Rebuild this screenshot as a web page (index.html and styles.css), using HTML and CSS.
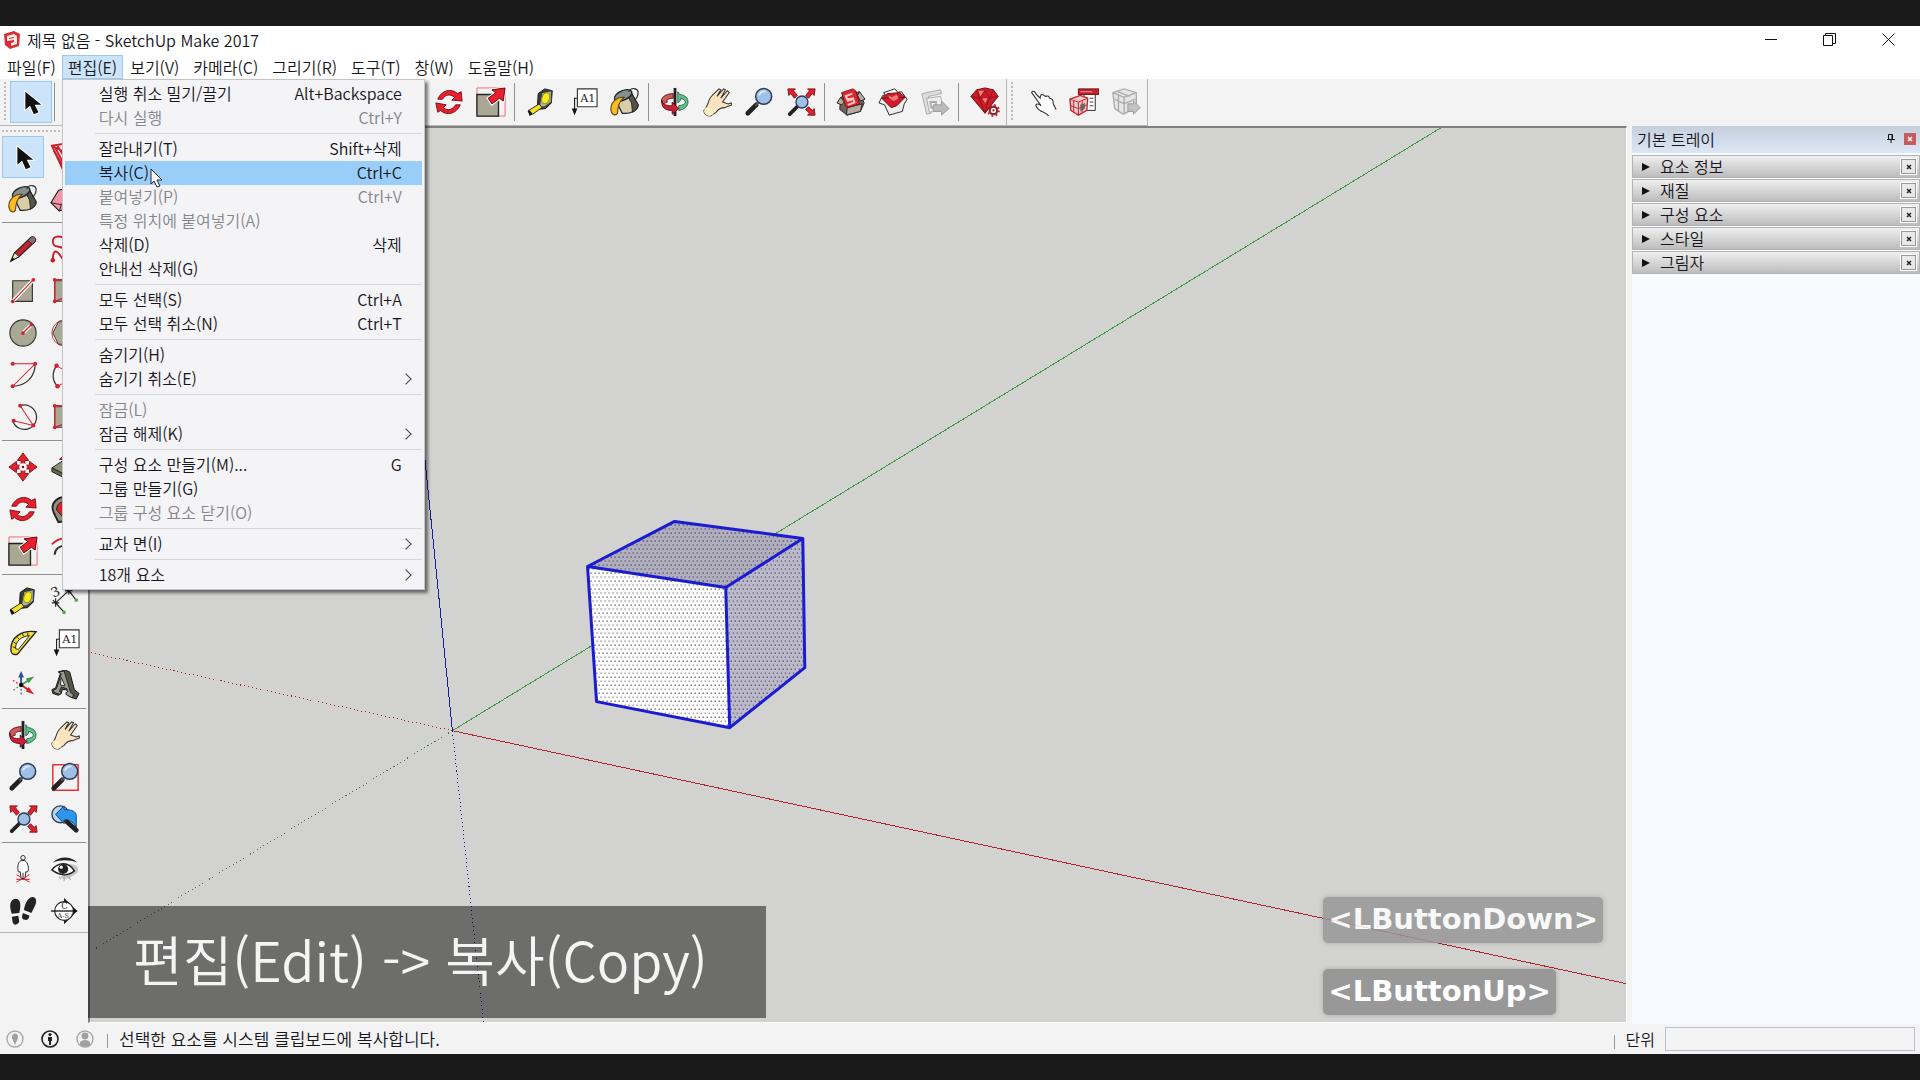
FILE: index.html
```
<!DOCTYPE html>
<html lang="ko">
<head>
  <meta charset="UTF-8" />
  <meta name="viewport" content="width=device-width, initial-scale=1" />
  <title>제목 없음 - SketchUp Make 2017</title>
  <link rel="stylesheet" href="styles.css">
</head>
<body>
  <!-- Icon sprite -->
  <svg class="sprite" aria-hidden="true">
    <symbol id="i-select" viewBox="0 0 32 32">
      <path d="M10 5v19l5-4 4 9 5-2-4-8h7z" fill="#111" stroke="#fff" stroke-width="2" paint-order="stroke"/>
    </symbol>
    <symbol id="i-component" viewBox="0 0 32 32">
      <path d="M2 4l12-2 16 5-4 18-12 5z" fill="#fbe9e9" stroke="#c9202c" stroke-width="2"/>
      <path d="M2 4l12 6 16-3M14 10v20M5 5l9 17M8 4l6 10M4 9l10 17" fill="none" stroke="#c9202c" stroke-width="2"/>
    </symbol>
    <symbol id="i-paint" viewBox="0 0 32 32">
      <path d="M5 12L22 5l8 14c0 6-8 10-17 9z" fill="#d8cfa9" stroke="#222" stroke-width="1.4"/>
      <path d="M22 5l8 14c0 4-3 6-6 8l-1-10-4-7z" fill="#55534b" stroke="#222"/>
      <ellipse cx="14" cy="9" rx="10" ry="5" transform="rotate(-24 14 9)" fill="#85918f" stroke="#222" stroke-width="1.4"/>
      <path d="M20 5c2-5 9-4 10 0 0 4-1 7-4 9" fill="none" stroke="#333" stroke-width="1.3"/>
      <path d="M15 11C8 10 0 16 1 25c1 5 5 6 7 3 0-6 1-12 7-17z" fill="#fbb924" stroke="#5b4310" stroke-width="1.2"/>
    </symbol>
    <symbol id="i-eraser" viewBox="0 0 32 32">
      <path d="M1 20L9 7l12-4 9 6-7 14-13 6z" fill="#f792ab" stroke="#222" stroke-width="1.2"/>
      <path d="M1 20l11 2 9-12 9-1M12 22l-2 7" fill="none" stroke="#222"/>
    </symbol>
    <symbol id="i-pencil" viewBox="0 0 32 32">
      <path d="M3 29l4-9L24 4c2-2 6 1 5 4L12 24z" fill="#c3242e" stroke="#222" stroke-width="1.2"/>
      <path d="M3 29l4-9 5 4z" fill="#efe2b6" stroke="#222"/><path d="M3 29l2-4 2 2z" fill="#111"/>
      <path d="M21 7l4-4c3-1 6 2 4 5l-3 3z" fill="#8c6c6c" stroke="#222"/>
    </symbol>
    <symbol id="i-freehand" viewBox="0 0 32 32">
      <path d="M3 29c0-18 7-8 10-3s12-6 4-10S3 15 3 8s8-6 14-3 10 2 12-1" fill="none" stroke="#c9202c" stroke-width="2"/>
      <circle cx="3" cy="28" r="2.4" fill="#c9202c"/>
    </symbol>
    <symbol id="i-rect" viewBox="0 0 32 32">
      <path d="M5 5h21v22H5z" fill="#a9a894" stroke="#333" stroke-width="1.2"/>
      <path d="M5 27L26 5" stroke="#fff" stroke-width="4"/><path d="M5 27L26 5" stroke="#d3222e" stroke-width="1.2"/>
      <circle cx="5" cy="27" r="2" fill="#d3222e"/><circle cx="27" cy="4" r="2" fill="#d3222e"/>
    </symbol>
    <symbol id="i-rotrect" viewBox="0 0 32 32">
      <path d="M5 5h22v22H5z" fill="#a9a894" stroke="#333"/>
      <path d="M5 27V4h22M5 27l22-8" fill="none" stroke="#d3222e" stroke-width="1.5"/>
      <circle cx="5" cy="4" r="2" fill="#d3222e"/><circle cx="5" cy="27" r="2" fill="#d3222e"/><circle cx="27" cy="4" r="2" fill="#d3222e"/>
    </symbol>
    <symbol id="i-circle" viewBox="0 0 32 32">
      <circle cx="16" cy="16" r="14" fill="#a9a894" stroke="#333" stroke-width="1.2"/>
      <path d="M16 16l9-9" stroke="#fff" stroke-width="4"/><path d="M16 16l9-9" stroke="#d3222e" stroke-width="1.4"/>
      <circle cx="16" cy="16" r="2" fill="#d3222e"/><circle cx="25" cy="7" r="2" fill="#d3222e"/>
    </symbol>
    <symbol id="i-polygon" viewBox="0 0 32 32">
      <circle cx="16" cy="16" r="14" fill="#fff" stroke="#d3222e"/>
      <path d="M3 16L9 4h14l6 12-6 12H9z" fill="#a9a894" stroke="#333"/>
    </symbol>
    <symbol id="i-arc" viewBox="0 0 32 32">
      <path d="M29 4c0 14-10 24-24 24" fill="none" stroke="#333" stroke-width="1.3"/>
      <path d="M5 4h24L5 28" fill="none" stroke="#d3222e" stroke-width="1.1"/>
      <circle cx="5" cy="4" r="2.2" fill="#d3222e"/><circle cx="29" cy="4" r="2.2" fill="#d3222e"/><circle cx="5" cy="28" r="2.2" fill="#d3222e"/>
    </symbol>
    <symbol id="i-arc2" viewBox="0 0 32 32">
      <path d="M7 6C2 13 2 22 8 28" fill="none" stroke="#333" stroke-width="1.4"/>
      <path d="M7 6l20 12L8 28" fill="none" stroke="#d3222e"/>
      <circle cx="7" cy="6" r="2.4" fill="#d3222e"/><circle cx="8" cy="28" r="2.4" fill="#d3222e"/>
    </symbol>
    <symbol id="i-pie" viewBox="0 0 32 32">
      <path d="M13 4a13 13 0 1 1-8 16" fill="none" stroke="#333" stroke-width="1.3"/>
      <path d="M13 4l14 21-21-5" fill="none" stroke="#d3222e" stroke-width="1.1"/>
      <circle cx="13" cy="4" r="2.2" fill="#d3222e"/><circle cx="27" cy="25" r="2.2" fill="#d3222e"/><circle cx="6" cy="20" r="2.2" fill="#d3222e"/>
    </symbol>
    <symbol id="i-move" viewBox="0 0 32 32">
      <path d="M16 1l6 8h-4v5h5v-4l8 6-8 6v-4h-5v5h4l-6 8-6-8h4v-5H9v4l-8-6 8-6v4h5V9h-4z" fill="#e8202e" stroke="#7c1219"/>
      <circle cx="16" cy="16" r="4" fill="#fff"/><circle cx="16" cy="16" r="1.4" fill="#7c1219"/>
    </symbol>
    <symbol id="i-pushpull" viewBox="0 0 32 32">
      <path d="M2 17L14 9l16 7-12 9z" fill="#8f9279" stroke="#222"/><path d="M2 17v4l16 8 12-9v-4l-12 9z" fill="#63654f" stroke="#222"/>
      <path d="M16 2l6 6h-4v7h-4V8h-4z" fill="#e8202e" stroke="#7c1219"/>
    </symbol>
    <symbol id="i-rotate" viewBox="0 0 32 32">
      <path d="M4 13C8 3 19 1 25 7l4-2 1 10-11-1 3-3C17 7 12 8 9 13z" fill="#e8202e" stroke="#7c1219"/>
      <path d="M28 19c-4 10-15 12-21 6l-3 2-2-10 11 2-3 3c5 4 10 2 13-3z" fill="#e8202e" stroke="#7c1219"/>
    </symbol>
    <symbol id="i-follow" viewBox="0 0 32 32">
      <path d="M4 20C-1 8 10 2 20 3l10 8-4 16-17 3z" fill="#92917f" stroke="#222" stroke-width="2"/>
      <path d="M7 17C7 8 15 7 22 9l-2 11-6 5z" fill="#d7232e" stroke="#222"/>
    </symbol>
    <symbol id="i-scale" viewBox="0 0 32 32">
      <path d="M1 1h30v30H1z" fill="none" stroke="#ee6570"/>
      <path d="M1 8h23v23H1z" fill="#a9a894" stroke="#222" stroke-width="1.4"/>
      <path d="M31 1l-2 14-4-3-8 6-4-6 8-6-4-3z" fill="#e8202e" stroke="#fff" stroke-width="3" paint-order="stroke"/>
      <path d="M31 1l-2 14-4-3-8 6-4-6 8-6-4-3z" fill="#e8202e" stroke="#5c0d13"/>
    </symbol>
    <symbol id="i-offset" viewBox="0 0 32 32">
      <path d="M2 9C9 1 22 0 29 8" fill="none" stroke="#d3222e" stroke-width="2"/><path d="M5 20c0-13 22-13 22 2" fill="none" stroke="#333" stroke-width="2"/>
    </symbol>
    <symbol id="i-tape" viewBox="0 0 32 32">
      <path d="M13 7l7-5 8 2-1 13-6 6-9 1z" fill="#3c3c38" stroke="#111"/>
      <path d="M17 6l10-2v12l-7 5-6 1z" fill="#aeb0a4" stroke="#333"/>
      <ellipse cx="21" cy="12" rx="4" ry="6" fill="#faeb1a" stroke="#8b8420" transform="rotate(18 21 12)"/>
      <path d="M14 18l3 4L7 29l-4-4z" fill="#f4e21c" stroke="#222"/><path d="M3 24l4 5-3 2-2-5z" fill="#111"/>
    </symbol>
    <symbol id="i-dimension" viewBox="0 0 32 32">
      <path d="M6 18L20 5M6 18l9 10M20 5l8 10M2 18h8M6 13v9M3 15l6 6M16 5h8M20 1v8M17 2l6 6" fill="none" stroke="#222" stroke-width="1.2"/>
      <circle cx="28" cy="15" r="2" fill="#55b04b"/><circle cx="15" cy="28" r="2" fill="#55b04b"/>
      <text x="2" y="11" class="icon-text" font-size="14" transform="rotate(-25 6 8)">3</text>
    </symbol>
    <symbol id="i-protractor" viewBox="0 0 32 32">
      <path d="M3 23C3 10 14 2 30 4L10 28C5 29 3 27 3 23z" fill="#f3de2f" stroke="#222" stroke-width="1.4"/>
      <path d="M8 22c0-8 6-13 15-14L11 23z" fill="#f5f5f5" stroke="#222"/>
      <path d="M5 20l3 1M6 15l3 2M10 10l2 2M15 6l2 3M21 5v3" stroke="#222"/>
    </symbol>
    <symbol id="i-text" viewBox="0 0 32 32">
      <path d="M10 2h21v19H10z" fill="#fff" stroke="#333" stroke-width="1.2"/>
      <path d="M10 12H7v12" fill="none" stroke="#222" stroke-width="1.2"/><path d="M4 23h6l-3 7z" fill="#111"/>
      <text x="13" y="16" class="icon-text" font-size="12">A1</text>
    </symbol>
    <symbol id="i-axes" viewBox="0 0 32 32">
      <path d="M14 16v11" stroke="#25509f" stroke-width="1.2" stroke-dasharray="2 2"/>
      <path d="M14 16L5 22" stroke="#3f9b48" stroke-width="1.2" stroke-dasharray="2 2"/>
      <path d="M14 16L5 11" stroke="#d3222e" stroke-width="1.2" stroke-dasharray="2 2"/>
      <path d="M14 16V6" stroke="#25509f" stroke-width="2"/><path d="M11 8l3-7 3 7z" fill="#25509f"/>
      <path d="M14 16l8-5" stroke="#3f9b48" stroke-width="2"/><path d="M19 9l9-2-6 7z" fill="#3f9b48"/>
      <path d="M14 16l9 6" stroke="#d3222e" stroke-width="2"/><path d="M22 18l6 8-9-3z" fill="#d3222e"/>
      <circle cx="14" cy="16" r="2.4" fill="#111"/>
    </symbol>
    <symbol id="i-text3d" viewBox="0 0 32 32">
      <path d="M9 2l7-2 5 2 5 19 5 4-3 6-8-3-1-3 1-2-3-2h-4l-1 4-3 2-6-2-1-4 4-2 5-15z" fill="#53544c" stroke="#111"/>
      <path d="M9 2l6-1 7 23 3 2-1 4-7-4v-2l2-1-1-3-6-2-2 5 2 1-1 2-7-2v-3l3-1 5-16z" fill="#9b9b8c" stroke="#222"/>
      <path d="M12 8l4 9-5-1z" fill="#f4f4f4" stroke="#222"/>
    </symbol>
    <symbol id="i-orbit" viewBox="0 0 32 32">
      <path d="M14 7C1 8 0 15 3 18l5-2c-2-2 1-4 6-4z" fill="#cf5b57" stroke="#6b1015"/>
      <path d="M19 5v12l3-3v-2c7 2 7 7-2 8v5c13-2 13-16 1-17z" fill="#5fc08c" stroke="#2b6b45"/>
      <path d="M16 1v30" stroke="#222" stroke-width="3"/>
      <path d="M2 14c0 5 6 6 11 6v-4l7 7-7 6v-4C6 25 1 22 2 14z" fill="#cf1f38" stroke="#5c0d19"/>
    </symbol>
    <symbol id="i-hand" viewBox="0 0 32 32">
      <path d="M2 25c5-4 4-12 9-16l7-7 2 1-4 7 7-8 2 1-5 9 7-8 2 2-7 10 6 2 3-1 1 2-8 3c-6 0-7 3-9 5l-6 4c-4 0-7-2-7-6z" fill="#fbe3c0" stroke="#333" stroke-width="1.1"/>
      <path d="M3 23c5-4 8 1 9 6l-4 2c-4 0-7-4-5-8z" fill="#fbf0c4"/>
    </symbol>
    <symbol id="i-zoom" viewBox="0 0 32 32">
      <path d="M4 28l9-9" stroke="#222" stroke-width="5" stroke-linecap="round"/><path d="M12 20l4-4" stroke="#555" stroke-width="2"/>
      <circle cx="21" cy="10" r="8.5" fill="#9fc0e6" stroke="#2c3a55" stroke-width="1.6"/>
      <path d="M16 9c1-3 4-5 7-4" fill="none" stroke="#dbe9f8" stroke-width="2"/>
    </symbol>
    <symbol id="i-zoomwin" viewBox="0 0 32 32">
      <path d="M3 3h27v27H3z" fill="none" stroke="#e8303c" stroke-width="1.6"/><use href="#i-zoom"/>
    </symbol>
    <symbol id="i-zoomext" viewBox="0 0 32 32">
      <path d="M4 29l9-9" stroke="#222" stroke-width="4" stroke-linecap="round"/>
      <circle cx="17" cy="16" r="6.4" fill="#9fc0e6" stroke="#2c3a55" stroke-width="1.4"/>
      <path d="M2 2h8l-2 2 4 5-3 3-4-5-2 2zM31 2h-8l2 2-4 5 3 3 4-5 2 2zM31 30h-8l2-2-4-4 3-3 4 4 2-2z" fill="#e1202e" stroke="#7c1219"/>
    </symbol>
    <symbol id="i-previous" viewBox="0 0 32 32">
      <circle cx="11" cy="11" r="9" fill="#b8d2ef" stroke="#2c3a55" stroke-width="1.4"/>
      <path d="M6 11l9-9v4c9 0 13 2 13 7v13c-2-6-6-9-13-9v4z" fill="#2d97ee" stroke="#163f7a"/>
      <path d="M18 19l10 9" stroke="#222" stroke-width="5" stroke-linecap="round"/>
    </symbol>
    <symbol id="i-camera" viewBox="0 0 32 32">
      <path d="M9 22l14 8M23 22L9 30M9 27h14" stroke="#e0303c" stroke-width="1.2"/>
      <path d="M14 7c-4 2-4 8-3 12h2l1 7h4l1-7h2c2-4 0-10-3-12z" fill="#fff" stroke="#222"/><circle cx="16" cy="4" r="2.4" fill="#fff" stroke="#222"/><path d="M16 20v6" stroke="#222"/>
    </symbol>
    <symbol id="i-eye" viewBox="0 0 32 32">
      <path d="M3 9C10 2 22 2 29 9 21 6 11 6 3 9z" fill="#222"/><path d="M20 11c7-1 12 3 9 9l-9 6H11z" fill="#c4c4c4"/>
      <path d="M2 17c7-9 18-9 24 1-7 6-16 5-24-1z" fill="#fff" stroke="#222" stroke-width="1.6"/>
      <circle cx="14" cy="16" r="5.4" fill="#222"/><circle cx="12" cy="14" r="1.7" fill="#fff"/>
      <path d="M10 24l1 3M15 25v4M20 24l2 4" stroke="#999"/>
    </symbol>
    <symbol id="i-walk" viewBox="0 0 32 32">
      <path d="M8 3c6 0 6 8 4 15l-8 1C1 10 2 4 8 3zM4 22l7-1 1 6c-1 4-6 5-7 1zM26 1c5 0 5 6 2 11l-3 6-8-3c1-7 4-13 9-14zM16 18l7 3c-1 5-4 5-6 4-3-1-2-4-1-7z" fill="#222"/>
    </symbol>
    <symbol id="i-section" viewBox="0 0 32 32">
      <path d="M15 2l14 14-14 14z" fill="#111"/><circle cx="15" cy="16" r="10" fill="#fff" stroke="#222" stroke-width="1.2"/><path d="M1 16h28" stroke="#111" stroke-width="1.4"/>
      <text x="12" y="14" class="icon-text" font-size="9">C</text><text x="8" y="23" class="icon-text" font-size="7">A-S</text>
    </symbol>
    <symbol id="i-box" viewBox="0 0 32 32">
      <path d="M5 11l20-6 5 12-4 9-14 4-8-6z" fill="#6d655c" stroke="#222"/>
      <path d="M5 11l-4 6 5 2 3-3zM25 5l6 8-5 2-3-6zM12 22l-1 8 15-4 2-8z" fill="#b5aba1" stroke="#222"/>
    </symbol>
    <symbol id="i-warehouse" viewBox="0 0 32 32">
      <use href="#i-box"/><path d="M6 6l12-4 3 2 4 14-12 4-3-2z" fill="#e1252f" stroke="#7c1219"/>
      <path d="M9 9l8-3 1 2-6 2 1 2 6-1 2 6-8 3-1-2 6-2v-2l-6 2z" fill="#f7c9c9"/>
    </symbol>
    <symbol id="i-extware" viewBox="0 0 32 32">
      <path d="M5 9l-4 8 6 2 5 11 14-4 2-8 3-5-6-8z" fill="#eee" stroke="#222"/><path d="M6 6l12-4 5 6-12 6z" fill="#fff" stroke="#222"/>
      <path d="M4 12l6-5 13-1 6 5-9 9-6 2z" fill="#d21d29" stroke="#6b1015"/><path d="M4 12l25-1" stroke="#6b1015"/>
      <path d="M11 9l4 2 5-3 2 4-5 3-5-3z" fill="#ec7f7d"/>
    </symbol>
    <symbol id="i-layout" viewBox="0 0 32 32">
      <path d="M2 7l20-4 1 4-14 3 3 18-5 1z" fill="#ddd" stroke="#aaa"/><path d="M7 12l15-2 3 14-15 3z" fill="#eee" stroke="#aaa"/><path d="M11 16h6v6h-5z" fill="#fff" stroke="#aaa" stroke-width="2"/>
      <path d="M14 19h9v-4l8 8-8 7v-4h-9z" fill="#bbb" stroke="#999"/>
    </symbol>
    <symbol id="i-ruby" viewBox="0 0 32 32">
      <path d="M1 10l6-7 9-2 9 2 5 7-14 18z" fill="#cf1b28" stroke="#6b1015"/>
      <path d="M1 10l9 2 10 0 10-2M7 3l3 9 6-8 5 8 4-9M10 12l6 16 4-16" fill="none" stroke="#8a121b"/><path d="M9 4l6 0-4 6zM13 12l6 0-3 5z" fill="#f2837f"/>
      <circle cx="25" cy="25" r="4" fill="#fff" stroke="#a02028" stroke-width="2.4"/><circle cx="25" cy="25" r="6" fill="none" stroke="#a02028" stroke-width="1.6" stroke-dasharray="2 2.7"/><circle cx="25" cy="25" r="1.2" fill="#a02028"/>
    </symbol>
    <symbol id="i-interact" viewBox="0 0 32 32">
      <path d="M5 6c1-3 4-1 5 2l4 4c0-4 2-5 4-3l2 1c2-1 4 0 4 2 3 0 4 3 4 6l3 6-8 7c-2-5-9-3-13-10-2-3 2-4 5-1z" fill="#fff"/>
      <path d="M31 24l-3-6c0-3-1-6-4-6 0-2-2-3-4-2l-2-1c-2-2-4-1-4 3l-4-4C9 5 6 3 5 6l10 14c-3-3-7-2-5 1 4 7 11 5 13 10" fill="none" stroke="#333" stroke-width="1.2"/>
    </symbol>
    <symbol id="i-compopt" viewBox="0 0 32 32">
      <path d="M16 5h12v20H16z" fill="#fff" stroke="#222"/><path d="M10 2h22v6H10z" fill="#c8202c" stroke="#6b1015"/><path d="M12 5h13" stroke="#f2a1a1"/><path d="M22 12h4M22 16h4M22 20h4" stroke="#333"/>
      <path d="M1 13l11-4 8 3-1 13-9 5-8-5z" fill="#efc8c8" stroke="#c8202c" stroke-width="1.4"/><path d="M1 13l9 3 10-4M10 16v14M5 15v12M14 15v12M2 20l8 3 9-4" fill="none" stroke="#c8202c"/><path d="M12 19l5-2v6l-5 3z" fill="#666"/>
    </symbol>
    <symbol id="i-compattr" viewBox="0 0 32 32">
      <path d="M2 6l12-4 13 4v16l-14 7-9-6z" fill="#e6e6e6" stroke="#aaa" stroke-width="1.4"/><path d="M2 6l12 5 13-5M14 11v17M8 8v18M4 13l10 5 12-5M7 5l13 5" fill="none" stroke="#aaa" stroke-width="1.4"/>
      <path d="M18 18h6v-3l7 7-7 7v-3h-6z" fill="#c3c3c3" stroke="#999"/>
    </symbol>
  </svg>

  <div class="app">
    <header class="title-bar">
      <svg class="app-logo" viewBox="0 0 18 18" aria-hidden="true">
        <path d="M1 3l10-3 6 3-1 12-9 3-5-4z" fill="#d92b33"/>
        <path d="M4 5l7-2 3 2v8l-6 2v-3l3-1V9l-7 1z" fill="#fff" opacity=".9"/><path d="M6 7l5-1v1l-5 1z" fill="#d92b33"/>
      </svg>
      <h1 class="title">제목 없음 - SketchUp Make 2017</h1>
      <div class="window-controls">
        <button type="button" aria-label="최소화"><svg viewBox="0 0 13 13"><path d="M0 6.5h12"/></svg></button>
        <button type="button" aria-label="이전 크기로 복원"><svg viewBox="0 0 13 13"><path d="M.5 2.5h9v10h-9zM2.5 2V.5h10v10H10"/></svg></button>
        <button type="button" aria-label="닫기"><svg viewBox="0 0 13 13"><path d="M.5.5l12 12M12.5.5l-12 12"/></svg></button>
      </div>
    </header>

    <nav class="menu-bar">
      <button type="button">파일(F)</button>
      <div class="menu-open">
        <button type="button" class="active" aria-expanded="true">편집(E)</button>
        <div class="dropdown">
          <button type="button"><span>실행 취소 밀기/끌기</span><kbd>Alt+Backspace</kbd></button>
          <button type="button" disabled><span>다시 실행</span><kbd>Ctrl+Y</kbd></button>
          <hr>
          <button type="button"><span>잘라내기(T)</span><kbd>Shift+삭제</kbd></button>
          <button type="button" class="hovered"><span>복사(C)</span><kbd>Ctrl+C</kbd>
            <svg class="pointer" viewBox="0 0 13 20" aria-hidden="true"><path d="M1 1v15l3-3 3 6 3-1-3-6h5z"/></svg>
          </button>
          <button type="button" disabled><span>붙여넣기(P)</span><kbd>Ctrl+V</kbd></button>
          <button type="button" disabled><span>특정 위치에 붙여넣기(A)</span></button>
          <button type="button"><span>삭제(D)</span><kbd>삭제</kbd></button>
          <button type="button"><span>안내선 삭제(G)</span></button>
          <hr>
          <button type="button"><span>모두 선택(S)</span><kbd>Ctrl+A</kbd></button>
          <button type="button"><span>모두 선택 취소(N)</span><kbd>Ctrl+T</kbd></button>
          <hr>
          <button type="button"><span>숨기기(H)</span></button>
          <button type="button" class="has-sub"><span>숨기기 취소(E)</span></button>
          <hr>
          <button type="button" disabled><span>잠금(L)</span></button>
          <button type="button" class="has-sub"><span>잠금 해제(K)</span></button>
          <hr>
          <button type="button"><span>구성 요소 만들기(M)...</span><kbd>G</kbd></button>
          <button type="button"><span>그룹 만들기(G)</span></button>
          <button type="button" disabled><span>그룹 구성 요소 닫기(O)</span></button>
          <hr>
          <button type="button" class="has-sub"><span>교차 면(I)</span></button>
          <hr>
          <button type="button" class="has-sub"><span>18개 요소</span></button>
        </div>
      </div>
      <button type="button">보기(V)</button>
      <button type="button">카메라(C)</button>
      <button type="button">그리기(R)</button>
      <button type="button">도구(T)</button>
      <button type="button">창(W)</button>
      <button type="button">도움말(H)</button>
    </nav>

    <div class="toolbar">
      <div class="tool-strip">
        <span class="grip"></span>
        <button type="button" class="tool selected" aria-label="선택"><svg><use href="#i-select"/></svg></button>
        <span class="divider"></span>
        <button type="button" class="tool" aria-label="지우개"><svg><use href="#i-eraser"/></svg></button>
        <span class="divider"></span>
        <button type="button" class="tool" aria-label="선"><svg><use href="#i-pencil"/></svg></button>
        <button type="button" class="tool" aria-label="호"><svg><use href="#i-arc"/></svg></button>
        <button type="button" class="tool" aria-label="도형"><svg><use href="#i-rect"/></svg></button>
        <span class="divider"></span>
        <button type="button" class="tool" aria-label="밀기/끌기"><svg><use href="#i-pushpull"/></svg></button>
        <button type="button" class="tool" aria-label="따라가기"><svg><use href="#i-follow"/></svg></button>
        <span class="divider"></span>
        <button type="button" class="tool" aria-label="오프셋"><svg><use href="#i-offset"/></svg></button>
        <span class="divider"></span>
        <button type="button" class="tool" aria-label="이동"><svg><use href="#i-move"/></svg></button>
        <button type="button" class="tool" aria-label="회전"><svg><use href="#i-rotate"/></svg></button>
        <button type="button" class="tool" aria-label="배율"><svg><use href="#i-scale"/></svg></button>
        <span class="divider"></span>
        <button type="button" class="tool" aria-label="줄자"><svg><use href="#i-tape"/></svg></button>
        <button type="button" class="tool" aria-label="텍스트"><svg><use href="#i-text"/></svg></button>
        <button type="button" class="tool" aria-label="페인트통"><svg><use href="#i-paint"/></svg></button>
        <span class="divider"></span>
        <button type="button" class="tool" aria-label="궤도"><svg><use href="#i-orbit"/></svg></button>
        <button type="button" class="tool" aria-label="이동 보기"><svg><use href="#i-hand"/></svg></button>
        <button type="button" class="tool" aria-label="확대/축소"><svg><use href="#i-zoom"/></svg></button>
        <button type="button" class="tool" aria-label="범위 확대"><svg><use href="#i-zoomext"/></svg></button>
        <span class="divider"></span>
        <button type="button" class="tool" aria-label="3D Warehouse"><svg><use href="#i-warehouse"/></svg></button>
        <button type="button" class="tool" aria-label="Extension Warehouse"><svg><use href="#i-extware"/></svg></button>
        <button type="button" class="tool" aria-label="LayOut으로 보내기"><svg><use href="#i-layout"/></svg></button>
        <span class="divider"></span>
        <button type="button" class="tool" aria-label="확장 관리자"><svg><use href="#i-ruby"/></svg></button>
      </div>
      <div class="tool-strip extra">
        <span class="grip"></span>
        <button type="button" class="tool" aria-label="상호작용"><svg><use href="#i-interact"/></svg></button>
        <button type="button" class="tool" aria-label="구성 요소 옵션"><svg><use href="#i-compopt"/></svg></button>
        <button type="button" class="tool" aria-label="구성 요소 속성"><svg><use href="#i-compattr"/></svg></button>
      </div>
    </div>

    <main class="workspace">
      <aside class="palette">
        <span class="grip-row"></span>
        <div class="tool-grid">
          <button type="button" class="tool selected" aria-label="선택"><svg><use href="#i-select"/></svg></button>
          <button type="button" class="tool" aria-label="구성 요소 만들기"><svg><use href="#i-component"/></svg></button>
          <button type="button" class="tool" aria-label="페인트통"><svg><use href="#i-paint"/></svg></button>
          <button type="button" class="tool" aria-label="지우개"><svg><use href="#i-eraser"/></svg></button>
        </div>
        <div class="tool-grid">
          <button type="button" class="tool" aria-label="선"><svg><use href="#i-pencil"/></svg></button>
          <button type="button" class="tool" aria-label="자유곡선"><svg><use href="#i-freehand"/></svg></button>
          <button type="button" class="tool" aria-label="직사각형"><svg><use href="#i-rect"/></svg></button>
          <button type="button" class="tool" aria-label="회전된 직사각형"><svg><use href="#i-rotrect"/></svg></button>
          <button type="button" class="tool" aria-label="원"><svg><use href="#i-circle"/></svg></button>
          <button type="button" class="tool" aria-label="다각형"><svg><use href="#i-polygon"/></svg></button>
          <button type="button" class="tool" aria-label="호"><svg><use href="#i-arc"/></svg></button>
          <button type="button" class="tool" aria-label="2점 호"><svg><use href="#i-arc2"/></svg></button>
          <button type="button" class="tool" aria-label="3점 호"><svg><use href="#i-pie"/></svg></button>
          <button type="button" class="tool" aria-label="파이"><svg><use href="#i-rotrect"/></svg></button>
        </div>
        <div class="tool-grid">
          <button type="button" class="tool" aria-label="이동"><svg><use href="#i-move"/></svg></button>
          <button type="button" class="tool" aria-label="밀기/끌기"><svg><use href="#i-pushpull"/></svg></button>
          <button type="button" class="tool" aria-label="회전"><svg><use href="#i-rotate"/></svg></button>
          <button type="button" class="tool" aria-label="따라가기"><svg><use href="#i-follow"/></svg></button>
          <button type="button" class="tool" aria-label="배율"><svg><use href="#i-scale"/></svg></button>
          <button type="button" class="tool" aria-label="오프셋"><svg><use href="#i-offset"/></svg></button>
        </div>
        <div class="tool-grid">
          <button type="button" class="tool" aria-label="줄자"><svg><use href="#i-tape"/></svg></button>
          <button type="button" class="tool" aria-label="치수"><svg><use href="#i-dimension"/></svg></button>
          <button type="button" class="tool" aria-label="각도기"><svg><use href="#i-protractor"/></svg></button>
          <button type="button" class="tool" aria-label="텍스트"><svg><use href="#i-text"/></svg></button>
          <button type="button" class="tool" aria-label="축"><svg><use href="#i-axes"/></svg></button>
          <button type="button" class="tool" aria-label="3D 텍스트"><svg><use href="#i-text3d"/></svg></button>
        </div>
        <div class="tool-grid">
          <button type="button" class="tool" aria-label="궤도"><svg><use href="#i-orbit"/></svg></button>
          <button type="button" class="tool" aria-label="이동 보기"><svg><use href="#i-hand"/></svg></button>
          <button type="button" class="tool" aria-label="확대/축소"><svg><use href="#i-zoom"/></svg></button>
          <button type="button" class="tool" aria-label="창 확대"><svg><use href="#i-zoomwin"/></svg></button>
          <button type="button" class="tool" aria-label="범위 확대"><svg><use href="#i-zoomext"/></svg></button>
          <button type="button" class="tool" aria-label="이전"><svg><use href="#i-previous"/></svg></button>
        </div>
        <div class="tool-grid">
          <button type="button" class="tool" aria-label="카메라 배치"><svg><use href="#i-camera"/></svg></button>
          <button type="button" class="tool" aria-label="둘러보기"><svg><use href="#i-eye"/></svg></button>
          <button type="button" class="tool" aria-label="걷기"><svg><use href="#i-walk"/></svg></button>
          <button type="button" class="tool" aria-label="단면"><svg><use href="#i-section"/></svg></button>
        </div>
      </aside>

      <section class="viewport">
        <svg class="scene" viewBox="90 128 1536 893" preserveAspectRatio="xMinYMin slice" role="img" aria-label="모델">
          <defs>
            <pattern id="dots" width="4" height="8" patternUnits="userSpaceOnUse">
              <path d="M0 0h1v1H0zM2 4h1v1H2z" fill="#223"/>
            </pattern>
          </defs>
          <!-- axes -->
          <g fill="none" shape-rendering="crispEdges">
            <path d="M452 730L1626 983" stroke="#b3232b"/>
            <path d="M452 730L1439 128" stroke="#3c9a3c"/>
            <path d="M452 730L391 128" stroke="#1c1c9c"/>
            <g stroke-dasharray="1 3">
              <path d="M452 730L90 652" stroke="#a81c1c"/>
              <path d="M452 730L90 951" stroke="#3c7a3c"/>
              <path d="M452 730L483 1021" stroke="#16168e"/>
            </g>
          </g>
          <!-- selected cube -->
          <path d="M587 566l87-45 128 17-77 49z" fill="#b1aebe"/>
          <path d="M725 587l77-49 2 129-75 60z" fill="#bcb9cb"/>
          <path d="M587 566l138 21 4 140-133-26z" fill="#fff"/>
          <path d="M587 566l87-45 128 17 2 129-75 60-133-26z" fill="url(#dots)"/>
          <path d="M587 566l87-45 128 17 2 129-75 60-133-26zl138 21 77-49M725 587l4 140" fill="none" stroke="#1b1bd2" stroke-width="3" stroke-linejoin="round"/>
        </svg>
        <p class="caption">편집(Edit) -&gt; 복사(Copy)</p>
        <div class="key-log">
          <span class="key fading">&lt;LButtonDown&gt;</span>
          <span class="key">&lt;LButtonUp&gt;</span>
        </div>
      </section>

      <aside class="tray">
        <header class="tray-header">
          <h2>기본 트레이</h2>
          <button type="button" class="pin" aria-label="고정"><svg viewBox="0 0 8 9"><path d="M1.5 5V.5h4V5M0 5.5h8M5 1v4M4 6v3"/></svg></button>
          <button type="button" class="close" aria-label="닫기"><svg viewBox="0 0 6 6"><path d="M1 1l4 4M5 1L1 5"/></svg></button>
        </header>
        <div class="panel"><button type="button" class="panel-title">요소 정보</button><button type="button" class="panel-close" aria-label="닫기"><svg viewBox="0 0 6 6"><path d="M1 1l4 4M5 1L1 5"/></svg></button></div>
        <div class="panel"><button type="button" class="panel-title">재질</button><button type="button" class="panel-close" aria-label="닫기"><svg viewBox="0 0 6 6"><path d="M1 1l4 4M5 1L1 5"/></svg></button></div>
        <div class="panel"><button type="button" class="panel-title">구성 요소</button><button type="button" class="panel-close" aria-label="닫기"><svg viewBox="0 0 6 6"><path d="M1 1l4 4M5 1L1 5"/></svg></button></div>
        <div class="panel"><button type="button" class="panel-title">스타일</button><button type="button" class="panel-close" aria-label="닫기"><svg viewBox="0 0 6 6"><path d="M1 1l4 4M5 1L1 5"/></svg></button></div>
        <div class="panel"><button type="button" class="panel-title">그림자</button><button type="button" class="panel-close" aria-label="닫기"><svg viewBox="0 0 6 6"><path d="M1 1l4 4M5 1L1 5"/></svg></button></div>
      </aside>
    </main>

    <footer class="status-bar">
      <button type="button" aria-label="위치"><svg viewBox="0 0 18 18"><circle cx="9" cy="9" r="8" fill="none" stroke="#aaa" stroke-width="1.4"/><path d="M9 15L6 8c-1-6 7-6 6 0z" fill="#a0a0a0"/></svg></button>
      <button type="button" aria-label="정보"><svg viewBox="0 0 18 18"><circle cx="9" cy="9" r="8" fill="none" stroke="#222" stroke-width="1.6"/><circle cx="9" cy="4.6" r="1.6" fill="#222"/><path d="M7 7h4v4h-1v4H8v-4H7z" fill="#222"/></svg></button>
      <button type="button" aria-label="로그인"><svg viewBox="0 0 18 18"><circle cx="9" cy="9" r="8" fill="none" stroke="#aaa" stroke-width="1.4"/><circle cx="9" cy="6" r="3.4" fill="#a0a0a0"/><path d="M4 15v-2c0-4 10-4 10 0v2c-3 2-7 2-10 0z" fill="#a0a0a0"/></svg></button>
      <p class="hint">선택한 요소를 시스템 클립보드에 복사합니다.</p>
      <label for="measure">단위</label>
      <input type="text" id="measure">
    </footer>
  </div>
</body>
</html>
```
FILE: styles.css
```
:root {
  --letterbox: #1a1a1a;
  --chrome: #f3f3f4;
  --canvas: #d2d2d0;
  --text-color: #16161c;
  --disabled: #85858a;
  --line: #8f8f8f;
  --accent-bg: #cce4f9;
  --accent-border: #9cc8ee;
}

* {
  box-sizing: border-box;
}

body {
  margin: 0;
  height: 100vh;
  padding: 26px 0;
  background: var(--letterbox);
  color: var(--text-color);
  font-family: "Noto Sans CJK KR", "Noto Sans", sans-serif;
  font-size: 16px;
  font-weight: 350;
  line-height: 24px;
}

button {
  margin: 0;
  padding: 0;
  border: 0;
  background: none;
  color: inherit;
  font: inherit;
}

h1,
h2,
p {
  margin: 0;
  font-size: 16px;
  font-weight: 350;
}

svg {
  display: block;
}

.sprite {
  display: none;
}

.icon-text {
  font-family: "DejaVu Serif", serif;
  font-weight: 400;
  fill: #222;
}

.app {
  display: flex;
  flex-direction: column;
  height: 100%;
  background: var(--chrome);
}

/* Title bar and menus */
.title-bar {
  display: flex;
  align-items: center;
  height: 29px;
  flex: none;
  padding: 0 2px 2px 3px;
  background: #fff;
}

.app-logo {
  width: 18px;
  height: 18px;
  margin-right: 6px;
}

.title {
  flex: 1;
}

.window-controls {
  display: flex;
}

.window-controls button {
  display: grid;
  place-items: center;
  width: 58px;
  height: 26px;
}

.window-controls button:last-child {
  width: 60px;
}

.window-controls svg {
  width: 13px;
  height: 13px;
  fill: none;
  stroke: #111;
}

.menu-bar {
  display: flex;
  flex: none;
  height: 24px;
  padding-left: 1px;
  background: #fff;
}

.menu-bar > button,
.menu-open > button {
  height: 24px;
  padding: 0 6px;
}

.menu-open ~ button {
  padding: 0 7px;
}

.menu-bar .active {
  background: var(--accent-bg);
  box-shadow: inset 0 0 0 1px var(--accent-border);
}

.menu-open {
  position: relative;
}

.dropdown {
  position: absolute;
  z-index: 10;
  top: 100%;
  left: 0;
  width: 363px;
  padding: 2px;
  border: 1px solid #c4c4c6;
  background: #f4f3f5;
  box-shadow: 3px 3px 3px rgba(0, 0, 0, 0.5);
}

.dropdown button {
  position: relative;
  display: flex;
  justify-content: space-between;
  width: 100%;
  height: 24px;
  padding: 0 20px 0 34px;
  line-height: 22px;
  text-align: left;
}

.dropdown button:disabled {
  color: var(--disabled);
}

.dropdown .hovered {
  background: #9acefa;
}

.dropdown kbd {
  font: inherit;
}

.dropdown hr {
  height: 1px;
  margin: 3px 0 3px 30px;
  border: 0;
  background: #d7d7da;
}

.has-sub::after {
  content: "";
  align-self: center;
  width: 7px;
  height: 7px;
  margin-right: -8px;
  border: solid #444;
  border-width: 1px 1px 0 0;
  transform: rotate(45deg);
}

.pointer {
  position: absolute;
  top: 7px;
  left: 85px;
  width: 13px;
  height: 20px;
  fill: #fff;
  stroke: #223;
}

/* Toolbars */
.toolbar {
  display: flex;
  flex: none;
  height: 47px;
}

.tool-strip {
  display: flex;
  align-items: center;
  padding-left: 4px;
  border-right: 1px solid #b5b5b5;
  border-bottom: 1px solid #b5b5b5;
}

.grip {
  width: 2px;
  height: 40px;
  margin-right: 4px;
  background: repeating-linear-gradient(#bbb 0 2px, transparent 2px 4px);
}

.extra .grip {
  margin-right: 8px;
}

.tool {
  display: grid;
  place-items: center;
  width: 42px;
  height: 42px;
}

.tool svg {
  width: 30px;
  height: 30px;
}

.tool.selected {
  background: var(--accent-bg);
  border: 1px solid var(--accent-border);
}

.divider {
  width: 1px;
  height: 38px;
  margin: 0 5px 0 2px;
  background: var(--line);
}

.workspace {
  display: flex;
  flex: 1;
  min-height: 0;
}

.palette {
  align-self: flex-start;
  padding: 4px 2px 0;
  border-bottom: 1px solid #b5b5b5;
}

.grip-row {
  display: block;
  height: 2px;
  margin-bottom: 4px;
  background: repeating-linear-gradient(90deg, #bbb 0 2px, transparent 2px 4px);
}

.tool-grid {
  display: grid;
  grid-template-columns: 42px 42px;
}

.tool-grid + .tool-grid {
  margin-top: 2px;
  padding-top: 5px;
  border-top: 1px solid var(--line);
}

/* Model view */
.viewport {
  position: relative;
  flex: 1;
  min-width: 0;
  margin-bottom: 1px;
  border: solid #808080;
  border-width: 2px 0 0 2px;
  border-right: 1px solid #fff;
  border-bottom: 1px solid #fff;
  background: var(--canvas);
}

.scene {
  width: 100%;
  height: 100%;
}

.caption {
  position: absolute;
  left: -2px;
  bottom: 4px;
  padding: 13px 58px 19px 45px;
  background: rgba(0, 0, 0, 0.48);
  color: #f4f4f4;
  font-size: 54px;
  line-height: 80px;
}

.key-log {
  position: absolute;
  right: 23px;
  bottom: 7px;
  display: flex;
  flex-direction: column;
  align-items: flex-start;
  gap: 26px;
}

.key {
  padding: 0 5px 2px;
  border-radius: 5px;
  background: #989898;
  box-shadow: 0 0 5px rgba(0, 0, 0, 0.2);
  color: #fff;
  font-family: "DejaVu Sans", sans-serif;
  font-size: 29px;
  font-weight: 700;
  line-height: 44px;
}

.key.fading {
  opacity: 0.85;
}

/* Tray */
.tray {
  width: 288px;
  margin-left: 5px;
  background: #f7faff;
}

.tray-header {
  display: flex;
  align-items: center;
  height: 27px;
  margin-bottom: 2px;
  padding: 0 4px 2px 5px;
  background: linear-gradient(#c5cfde, #dce6f5);
}

.tray-header h2 {
  flex: 1;
}

.pin svg {
  width: 8px;
  height: 9px;
  fill: none;
  stroke: #111;
}

.close {
  display: grid;
  place-items: center;
  width: 12px;
  height: 12px;
  margin-left: 9px;
  background: #c75b60;
}

.close svg,
.panel-close svg {
  width: 6px;
  height: 6px;
  stroke: #fff;
  stroke-width: 1.5;
}

.panel {
  display: flex;
  align-items: center;
  height: 23px;
  margin-bottom: 1px;
  padding: 0 3px 0 9px;
  border: 1px solid #b4b4b4;
  background: linear-gradient(#f0f0f0, #bcbcbc);
}

.panel-title {
  display: flex;
  align-items: center;
  flex: 1;
  line-height: 21px;
}

.panel-title::before {
  content: "";
  margin-right: 10px;
  border: solid transparent;
  border-width: 4px 0 4px 8px;
  border-left-color: #111;
}

.panel-close {
  display: grid;
  place-items: center;
  width: 15px;
  height: 15px;
  border: 1px solid #999;
  background: #e8e8e8;
  box-shadow: 0 0 0 1px #fff;
}

.panel-close svg {
  stroke: #222;
}

/* Status bar */
.status-bar {
  display: flex;
  align-items: center;
  flex: none;
  height: 30px;
  padding: 0 5px 0 6px;
}

.status-bar button {
  margin-right: 17px;
}

.status-bar button svg {
  width: 18px;
  height: 18px;
}

.status-bar .hint {
  flex: 1;
  margin-left: -4px;
  font-size: 17px;
  line-height: 20px;
}

.status-bar .hint::before,
.status-bar label::before {
  content: "";
  display: inline-block;
  width: 1px;
  height: 14px;
  margin-right: 11px;
  background: #999;
  vertical-align: middle;
}

.status-bar input {
  width: 250px;
  height: 24px;
  margin-left: 10px;
  border: 1px solid #b9bfd4;
  background: transparent;
  font: inherit;
}
```
